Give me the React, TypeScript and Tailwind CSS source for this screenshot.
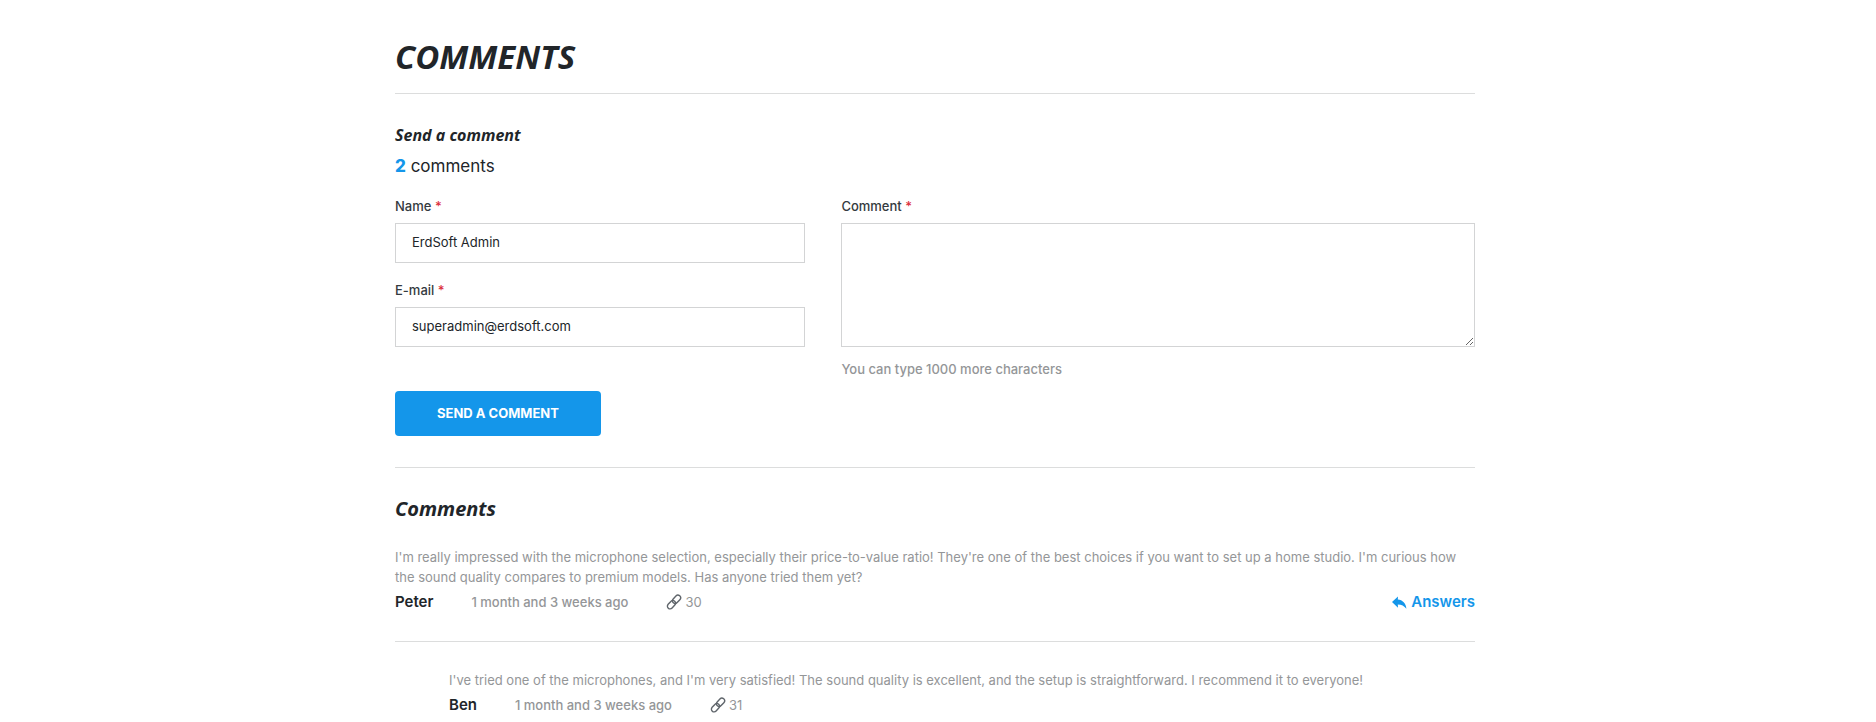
import { useState } from "react";

function LinkIcon() {
  return (
    <svg viewBox="0 0 16 16" className="h-4 w-4 shrink-0" fill="none" stroke="#5f656b" strokeWidth="1.4" strokeLinecap="round" aria-hidden="true">
      <g transform="rotate(-47 8 8)">
        <rect x="-0.4" y="5.3" width="9.4" height="5.4" rx="2.7" />
        <rect x="7" y="5.3" width="9.4" height="5.4" rx="2.7" />
      </g>
    </svg>
  );
}

function ReplyIcon() {
  return (
    <svg viewBox="0 0 15 13" className="h-[13px] w-[15px] shrink-0" fill="#1496ea" aria-hidden="true">
      <path d="M0 6 6 0.4 5.8 3.6C10.5 4.1 14 7.2 14.4 12.8 12.2 9.8 9.6 8.7 5.8 8.5L6 11.8Z" />
    </svg>
  );
}

function Required() {
  return <span className="text-[#dc2f3c]">*</span>;
}

const labelClass = "block text-[13px] leading-5 text-[#343a40] font-medium";
const fieldClass =
  "block w-full rounded-none border border-[#d3d4d5] bg-white px-4 text-[13px] text-[#212529] outline-none focus:border-[#1496ea]";

type EntryProps = { text: string; author: string; age: string; count: number; answers?: boolean };

function Entry({ text, author, age, count, answers }: EntryProps) {
  return (
    <article>
      <p className="text-[13px] leading-5 text-[#949698]">{text}</p>
      <div className="mt-[3px] flex items-center leading-6">
        <strong className="text-[15px] leading-6 font-semibold text-[#212529]">{author}</strong>
        <span className="ml-[38px] text-[13px] leading-6 font-medium text-[#949698]">{age}</span>
        <a href={`#comment-${count}`} className="ml-[38px] flex items-center gap-[3px] text-[13px] leading-6 text-[#949698]">
          <LinkIcon />
          {count}
        </a>
        {answers && (
          <a href="#answers" className="ml-auto flex items-center gap-1 text-[15px] leading-6 font-semibold text-[#1496ea]">
            <ReplyIcon />
            Answers
          </a>
        )}
      </div>
    </article>
  );
}

export default function App() {
  const [name, setName] = useState("ErdSoft Admin");
  const [email, setEmail] = useState("superadmin@erdsoft.com");
  const [comment, setComment] = useState("");

  return (
    <main className="bg-white pr-[6px] font-['Inter','Liberation_Sans',sans-serif] text-[#212529]">
      <div className="mx-auto max-w-[1080px] pt-9">
        <h1 className="border-b border-[#dcdddd] pb-4 font-['Open_Sans',sans-serif] text-[33px] leading-[41px] font-bold italic">
          COMMENTS
        </h1>

        <h2 className="mt-[31px] font-['Open_Sans',sans-serif] text-base leading-5 font-bold italic">Send a comment</h2>
        <p className="mt-[9px] text-[17px] leading-6">
          <strong className="font-extrabold text-[#1496ea]">2</strong> comments
        </p>

        <form className="mt-[18px] border-b border-[#dcdddd] pb-[31px]" onSubmit={(e) => e.preventDefault()}>
          <div className="-mx-[18px] grid grid-cols-5">
            <div className="col-span-2 px-[18px]">
              <label htmlFor="name" className={labelClass}>
                Name <Required />
              </label>
              <input id="name" value={name} onChange={(e) => setName(e.target.value)} className={`${fieldClass} mt-[7px] h-10 pb-[2px]`} />
              <label htmlFor="email" className={`${labelClass} mt-[17px]`}>
                E-mail <Required />
              </label>
              <input id="email" type="email" value={email} onChange={(e) => setEmail(e.target.value)} className={`${fieldClass} mt-[7px] h-10 pb-[2px]`} />
            </div>
            <div className="col-span-3 px-[18px]">
              <label htmlFor="comment" className={labelClass}>
                Comment <Required />
              </label>
              <textarea
                id="comment"
                maxLength={1000}
                value={comment}
                onChange={(e) => setComment(e.target.value)}
                className={`${fieldClass} mt-[7px] h-[124px] resize-y py-2`}
              />
              <p className="mt-3 text-[13px] leading-5 font-medium text-[#949698]">
                You can type {1000 - comment.length} more characters
              </p>
            </div>
          </div>
          <button type="submit" className="mt-3 h-[45px] rounded bg-[#1496ea] px-[42px] text-[13px] font-bold text-white">
            SEND A COMMENT
          </button>
        </form>

        <h2 className="mt-[29px] font-['Open_Sans',sans-serif] text-xl leading-6 font-bold italic">Comments</h2>
        <div className="mt-[26px] border-b border-[#dcdddd] pb-[27px]">
          <Entry
            text="I'm really impressed with the microphone selection, especially their price-to-value ratio! They're one of the best choices if you want to set up a home studio. I'm curious how the sound quality compares to premium models. Has anyone tried them yet?"
            author="Peter"
            age="1 month and 3 weeks ago"
            count={30}
            answers
          />
        </div>
        <div className="mt-7 pl-[54px]">
          <Entry
            text="I've tried one of the microphones, and I'm very satisfied! The sound quality is excellent, and the setup is straightforward. I recommend it to everyone!"
            author="Ben"
            age="1 month and 3 weeks ago"
            count={31}
          />
        </div>
      </div>
    </main>
  );
}
